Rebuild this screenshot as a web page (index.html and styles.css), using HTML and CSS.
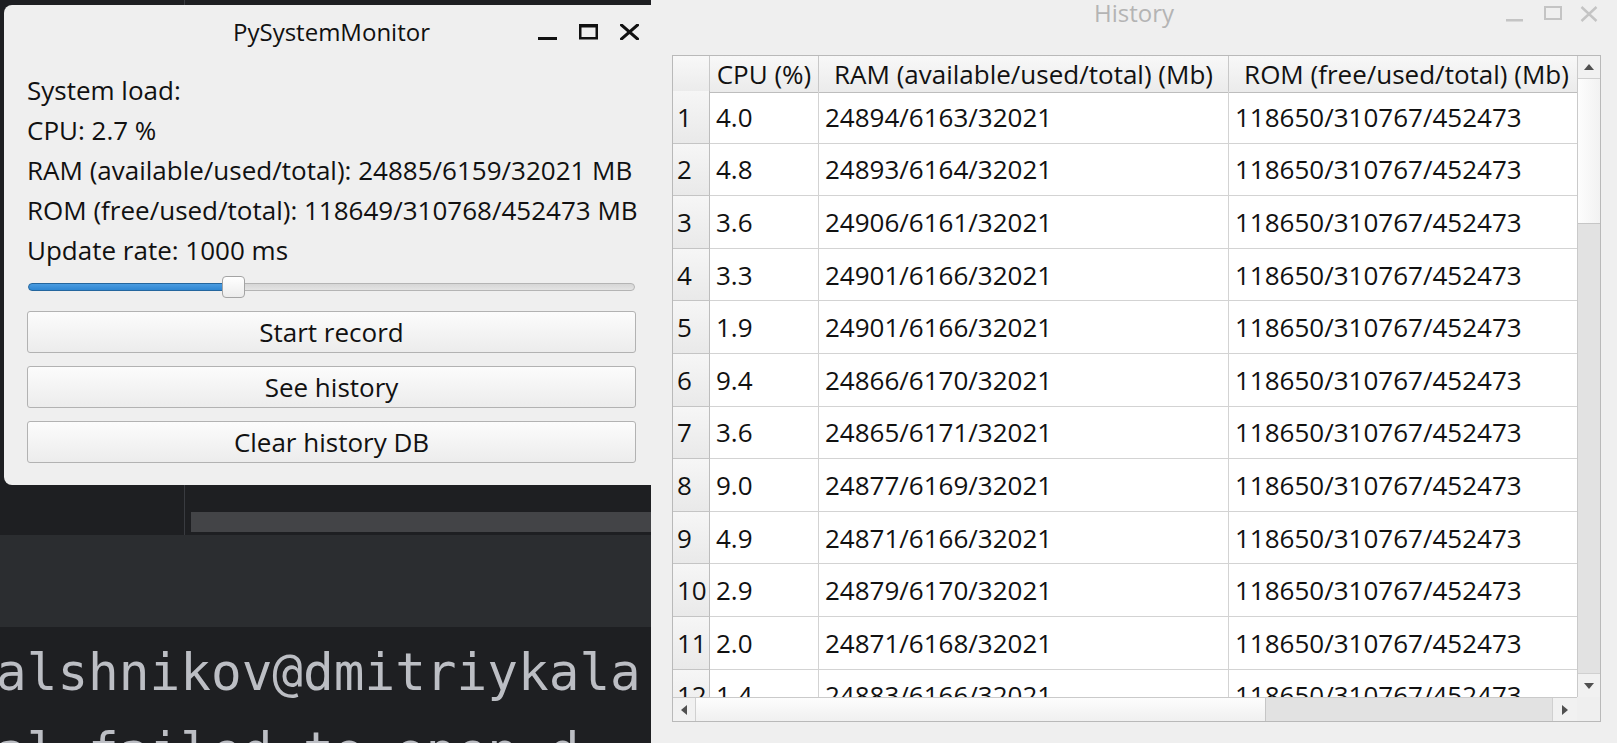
FILE: index.html
```html
<!DOCTYPE html>
<html>
<head>
<meta charset="utf-8">
<title>PySystemMonitor</title>
<link rel="stylesheet" href="styles.css">
</head>
<body>
<div class="desktop">
  <div class="ide">
    <div class="ide-top">
      <div class="ide-left"></div>
      <div class="ide-divider"></div>
      <div class="ide-right"><div class="ide-bar"></div></div>
    </div>
    <div class="ide-band"></div>
    <div class="terminal">
      <div class="term-line">alshnikov@dmitriykala</div>
      <div class="term-line">al failed to open d</div>
    </div>
  </div>

  <div class="window win-main">
    <div class="titlebar">
      <div></div>
      <div class="title">PySystemMonitor</div>
      <div class="controls">
        <svg class="ctl" width="19" height="16" viewBox="0 0 19 16"><rect x="0" y="13" width="19" height="3" fill="#111"/></svg>
        <svg class="ctl" width="19" height="16" viewBox="0 0 19 16"><rect x="1.25" y="1.25" width="16.5" height="13" fill="none" stroke="#111" stroke-width="2.5"/><rect x="0" y="0" width="19" height="3.5" fill="#111"/></svg>
        <svg class="ctl" width="19" height="16" viewBox="0 0 19 16"><path d="M1.5 1 L17.5 15 M17.5 1 L1.5 15" stroke="#111" stroke-width="3" stroke-linecap="square"/></svg>
      </div>
    </div>
    <div class="content">
      <div class="label">System load:</div>
      <div class="label">CPU: 2.7 %</div>
      <div class="label">RAM (available/used/total): 24885/6159/32021 MB</div>
      <div class="label">ROM (free/used/total): 118649/310768/452473 MB</div>
      <div class="label">Update rate: 1000 ms</div>
      <div class="slider">
        <div class="groove-fill"></div>
        <div class="handle"></div>
        <div class="groove-rest"></div>
      </div>
      <div class="buttons">
        <div class="btn">Start record</div>
        <div class="btn">See history</div>
        <div class="btn">Clear history DB</div>
      </div>
    </div>
  </div>

  <div class="window win-history">
    <div class="titlebar">
      <div></div>
      <div class="title">History</div>
      <div class="controls">
        <svg class="ctl" width="17" height="16" viewBox="0 0 17 16"><rect x="0" y="13" width="17" height="2.5" fill="#c4c4c4"/></svg>
        <svg class="ctl" width="18" height="16" viewBox="0 0 18 16"><rect x="1" y="1" width="16" height="12" fill="none" stroke="#c4c4c4" stroke-width="2"/></svg>
        <svg class="ctl" width="18" height="16" viewBox="0 0 18 16"><path d="M1.5 1 L16.5 15 M16.5 1 L1.5 15" stroke="#c4c4c4" stroke-width="2.4"/></svg>
      </div>
    </div>
    <div class="hist-body">
      <div class="frame">
        <div class="viewport">
          <div class="row hrow">
            <div class="hcell corner"></div>
            <div class="hcell">CPU (%)</div>
            <div class="hcell">RAM (available/used/total) (Mb)</div>
            <div class="hcell">ROM (free/used/total) (Mb)</div>
          </div>
          <div class="row drow"><div class="rh">1</div><div class="cell">4.0</div><div class="cell">24894/6163/32021</div><div class="cell">118650/310767/452473</div></div>
          <div class="row drow"><div class="rh">2</div><div class="cell">4.8</div><div class="cell">24893/6164/32021</div><div class="cell">118650/310767/452473</div></div>
          <div class="row drow"><div class="rh">3</div><div class="cell">3.6</div><div class="cell">24906/6161/32021</div><div class="cell">118650/310767/452473</div></div>
          <div class="row drow"><div class="rh">4</div><div class="cell">3.3</div><div class="cell">24901/6166/32021</div><div class="cell">118650/310767/452473</div></div>
          <div class="row drow"><div class="rh">5</div><div class="cell">1.9</div><div class="cell">24901/6166/32021</div><div class="cell">118650/310767/452473</div></div>
          <div class="row drow"><div class="rh">6</div><div class="cell">9.4</div><div class="cell">24866/6170/32021</div><div class="cell">118650/310767/452473</div></div>
          <div class="row drow"><div class="rh">7</div><div class="cell">3.6</div><div class="cell">24865/6171/32021</div><div class="cell">118650/310767/452473</div></div>
          <div class="row drow"><div class="rh">8</div><div class="cell">9.0</div><div class="cell">24877/6169/32021</div><div class="cell">118650/310767/452473</div></div>
          <div class="row drow"><div class="rh">9</div><div class="cell">4.9</div><div class="cell">24871/6166/32021</div><div class="cell">118650/310767/452473</div></div>
          <div class="row drow"><div class="rh">10</div><div class="cell">2.9</div><div class="cell">24879/6170/32021</div><div class="cell">118650/310767/452473</div></div>
          <div class="row drow"><div class="rh">11</div><div class="cell">2.0</div><div class="cell">24871/6168/32021</div><div class="cell">118650/310767/452473</div></div>
          <div class="row drow"><div class="rh">12</div><div class="cell">1.4</div><div class="cell">24883/6166/32021</div><div class="cell">118650/310767/452473</div></div>
        </div>
        <div class="vscroll">
          <div class="sb-btn sb-up"><div class="tri tri-up"></div></div>
          <div class="vhandle"></div>
          <div class="vtrack"></div>
          <div class="sb-btn sb-down"><div class="tri tri-down"></div></div>
        </div>
        <div class="hscroll">
          <div class="sb-btn sb-left"><div class="tri tri-left"></div></div>
          <div class="hhandle"></div>
          <div class="htrack"></div>
          <div class="sb-btn sb-right"><div class="tri tri-right"></div></div>
        </div>
        <div class="sb-corner"></div>
      </div>
    </div>
  </div>
</div>
</body>
</html>
```

FILE: styles.css
```css
* { box-sizing: border-box; }
html, body { margin: 0; padding: 0; }
body {
  width: 1617px;
  height: 743px;
  overflow: hidden;
  background: #1e1f22;
  font-family: "Open Sans", "Noto Sans", sans-serif;
}
.desktop { position: relative; width: 1617px; height: 743px; overflow: hidden; }

/* background IDE */
.ide { display: flex; flex-direction: column; height: 743px; }
.ide-top { height: 535px; display: flex; flex: none; }
.ide-left { width: 184px; background: #1e1f22; }
.ide-divider { width: 1px; background: #393b40; }
.ide-right { flex: 1; display: flex; flex-direction: column; justify-content: flex-end; padding: 0 0 3px 6px; }
.ide-bar { height: 20px; background: #434447; }
.ide-band { height: 92px; background: #2b2d30; flex: none; }
.terminal {
  flex: 1;
  min-height: 0;
  overflow: hidden;
  padding-top: 6px;
  margin-left: -4px;
  font-family: "DejaVu Sans Mono", monospace;
  font-size: 51px;
  line-height: 79px;
  color: #bcbec4;
}
.term-line { white-space: pre; height: 79px; }

/* windows */
.window {
  position: absolute;
  background: #efefef;
  display: flex;
  flex-direction: column;
  color: #111;
}
.win-main { left: 4px; top: 5px; width: 655px; height: 480px; border-radius: 8px; }
.win-history { left: 651px; top: -18px; width: 966px; height: 761px; }

.titlebar { display: grid; grid-template-columns: 1fr auto 1fr; align-items: center; flex: none; }
.win-main .titlebar { height: 52px; }
.win-history .titlebar { height: 60px; }
.title { font-size: 24px; }
.win-history .title { color: #b4b4b4; }
.controls { justify-self: end; display: flex; align-items: center; }
.ctl { display: block; }
.win-main .controls { gap: 22px; padding-right: 20px; padding-top: 2px; }
.win-history .controls { padding-right: 19px; padding-top: 3px; }
.win-history .controls .ctl:nth-child(1) { margin-right: 21px; }
.win-history .controls .ctl:nth-child(2) { margin-right: 18px; }

/* main content */
.content { padding: 13px 23px 22px 23px; font-size: 26px; display: flex; flex-direction: column; }
.label { height: 40px; line-height: 40px; white-space: nowrap; }
.slider { height: 34px; display: flex; align-items: center; padding: 0 1px; }
.groove-fill {
  width: 196px; height: 8px;
  background: linear-gradient(#4a9be0, #2f86d2);
  border: 1px solid #24669e;
  border-radius: 4px 0 0 4px;
}
.handle {
  width: 23px; height: 22px;
  margin: 0 -2px;
  background: linear-gradient(#ffffff, #ececec);
  border: 1px solid #a4a4a4;
  border-radius: 4px;
  position: relative;
  z-index: 1;
}
.groove-rest {
  flex: 1; height: 8px;
  background: linear-gradient(#d6d6d6, #e4e4e4);
  border: 1px solid #b4b4b4;
  border-radius: 0 4px 4px 0;
}
.buttons { display: flex; flex-direction: column; gap: 13px; margin-top: 7px; }
.btn {
  height: 42px;
  border: 1px solid #b2b2b2;
  border-radius: 3px;
  background: linear-gradient(#fcfcfc, #ececec);
  display: flex; align-items: center; justify-content: center;
  white-space: nowrap;
}

/* history table */
.hist-body { padding: 13px 0 0 21px; }
.frame {
  width: 929px; height: 667px;
  border: 1px solid #b9b9b9;
  display: grid;
  grid-template-columns: 904px 23px;
  grid-template-rows: 641px 24px;
  background: #fff;
  font-size: 26px;
}
.viewport { overflow: hidden; background: #fff; }
.row { display: grid; grid-template-columns: 37px 109px 410px 356px; width: 912px; }
.hrow { height: 35px; }
.drow { height: 52.6px; }
.hcell {
  background: linear-gradient(#f8f8f8, #ebebeb);
  border-right: 1px solid #c8c8c8;
  border-bottom: 1px solid #bdbdbd;
  display: flex; align-items: center; justify-content: center;
  white-space: nowrap;
}
.rh {
  background: linear-gradient(#f6f6f6, #e9e9e9);
  border-right: 1px solid #bdbdbd;
  border-bottom: 1px solid #c4c4c4;
  display: flex; align-items: center;
  padding-left: 4px;
  white-space: nowrap;
}
.cell {
  border-right: 1px solid #d3d3d3;
  border-bottom: 1px solid #d3d3d3;
  display: flex; align-items: center;
  padding-left: 6px;
  white-space: nowrap;
}

.vscroll { display: flex; flex-direction: column; background: #e2e2e2; border-left: 1px solid #cacaca; }
.hscroll { display: flex; background: #e2e2e2; border-top: 1px solid #cacaca; }
.sb-corner { background: #efefef; }
.sb-btn { background: #f1f1f1; display: flex; align-items: center; justify-content: center; flex: none; }
.sb-up { height: 23px; border-bottom: 1px solid #d0d0d0; }
.sb-down { height: 24px; border-top: 1px solid #d0d0d0; }
.sb-left { width: 23px; border-right: 1px solid #d0d0d0; }
.sb-right { width: 25px; border-left: 1px solid #d0d0d0; }
.vhandle { height: 145px; background: linear-gradient(90deg, #fdfdfd, #f2f2f2); border-bottom: 1px solid #c6c6c6; flex: none; }
.vtrack { flex: 1; }
.hhandle { width: 570px; background: linear-gradient(#fdfdfd, #f0f0f0); border-right: 1px solid #c6c6c6; flex: none; }
.htrack { flex: 1; }
.tri { width: 0; height: 0; }
.tri-up { border-left: 5px solid transparent; border-right: 5px solid transparent; border-bottom: 6px solid #505050; }
.tri-down { border-left: 5px solid transparent; border-right: 5px solid transparent; border-top: 6px solid #505050; }
.tri-left { border-top: 5px solid transparent; border-bottom: 5px solid transparent; border-right: 6px solid #505050; }
.tri-right { border-top: 5px solid transparent; border-bottom: 5px solid transparent; border-left: 6px solid #505050; }
```
